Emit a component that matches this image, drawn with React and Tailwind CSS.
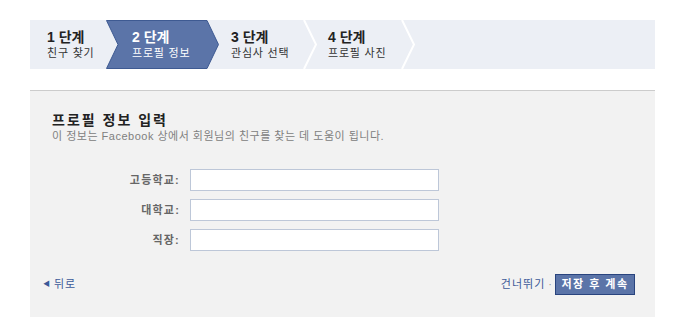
import React from "react";

const font = { fontFamily: '"Liberation Sans", "Noto Sans CJK KR", sans-serif' };

function Separator() {
  return (
    <svg className="absolute top-0 right-[-1px] h-[49px] w-[15px]" viewBox="0 0 15 49">
      <polyline points="1,0 13,24.5 1,49" fill="none" stroke="#ffffff" strokeWidth="2" />
    </svg>
  );
}

function Step({ num, label, active, width, pad, sep }) {
  return (
    <div className={`relative h-[49px] shrink-0 ${width} ${pad} pt-[10px]`}>
      {active && (
        <svg className="absolute inset-0 h-[49px] w-full" viewBox="0 0 113 49" preserveAspectRatio="none">
          <polygon
            points="0.5,0.5 101,0.5 112.5,24.5 101,48.5 0.5,48.5 12,24.5"
            fill="#5b74a8"
            stroke="#3e5a92"
            strokeWidth="1"
          />
        </svg>
      )}
      <div className="relative">
        <div className={`text-[14px] font-bold leading-[15px] ${active ? "text-white" : "text-[#222222]"}`}>
          {num} 단계
        </div>
        <div className={`text-[11px] leading-[16px] tracking-[0.8px] ${active ? "text-white" : "text-[#333333]"}`}>
          {label}
        </div>
      </div>
      {sep && <Separator />}
    </div>
  );
}

function Row({ label }) {
  return (
    <div className="flex items-center">
      <div className="w-[150px] text-right text-[11px] font-bold tracking-[1.2px] text-[#666666]">{label}</div>
      <input
        type="text"
        className="ml-[10px] h-[22px] w-[249px] border border-[#bdc7d8] bg-white px-1 text-[11px] outline-none"
      />
    </div>
  );
}

export default function App() {
  return (
    <div className="min-h-[332px] w-[686px] bg-white px-[30px] pt-[20px]" style={font}>
      <div className="w-[625px]">
        {/* STEPS */}
        <div className="flex h-[49px] bg-[#eceff5]">
          <Step num="1" label="친구 찾기" width="w-[76px]" pad="pl-[17px]" />
          <Step num="2" label="프로필 정보" width="w-[113px]" pad="pl-[26px]" active />
          <Step num="3" label="관심사 선택" width="w-[98px]" pad="pl-[12px]" sep />
          <Step num="4" label="프로필 사진" width="w-[98px]" pad="pl-[11px]" sep />
        </div>

        {/* PANEL */}
        <div className="mt-[21px] border-t border-[#cccccc] bg-[#f2f2f2] pb-[22px] pt-[20px]">
          <div className="px-[22px]">
            <h2 className="text-[14px] font-bold leading-[18px] tracking-[2px] text-[#222222]">
              프로필 정보 입력
            </h2>
            <p className="text-[11px] leading-[14px] tracking-[0.5px] text-[#808080]">
              이 정보는 Facebook 상에서 회원님의 친구를 찾는 데 도움이 됩니다.
            </p>
          </div>

          <div className="mt-[26px] flex flex-col gap-[8px]">
            <Row label="고등학교:" />
            <Row label="대학교:" />
            <Row label="직장:" />
          </div>

          <div className="mt-[23px] flex items-center justify-between pl-[13px] pr-[20px]">
            <a className="flex cursor-pointer items-center text-[11px] tracking-[1px] text-[#3b5998]">
              <span className="mr-[3px] text-[7px]">◀</span>뒤로
            </a>
            <div className="flex items-center">
              <a className="cursor-pointer text-[11px] tracking-[1px] text-[#3b5998]">건너뛰기</a>
              <span className="mx-[3px] text-[11px] text-[#999999]">·</span>
              <button className="h-[21px] w-[80px] border border-[#29447e] bg-[#5b74a8] text-[11px] font-bold tracking-[1.5px] text-white">
                저장 후 계속
              </button>
            </div>
          </div>
        </div>
      </div>
    </div>
  );
}
